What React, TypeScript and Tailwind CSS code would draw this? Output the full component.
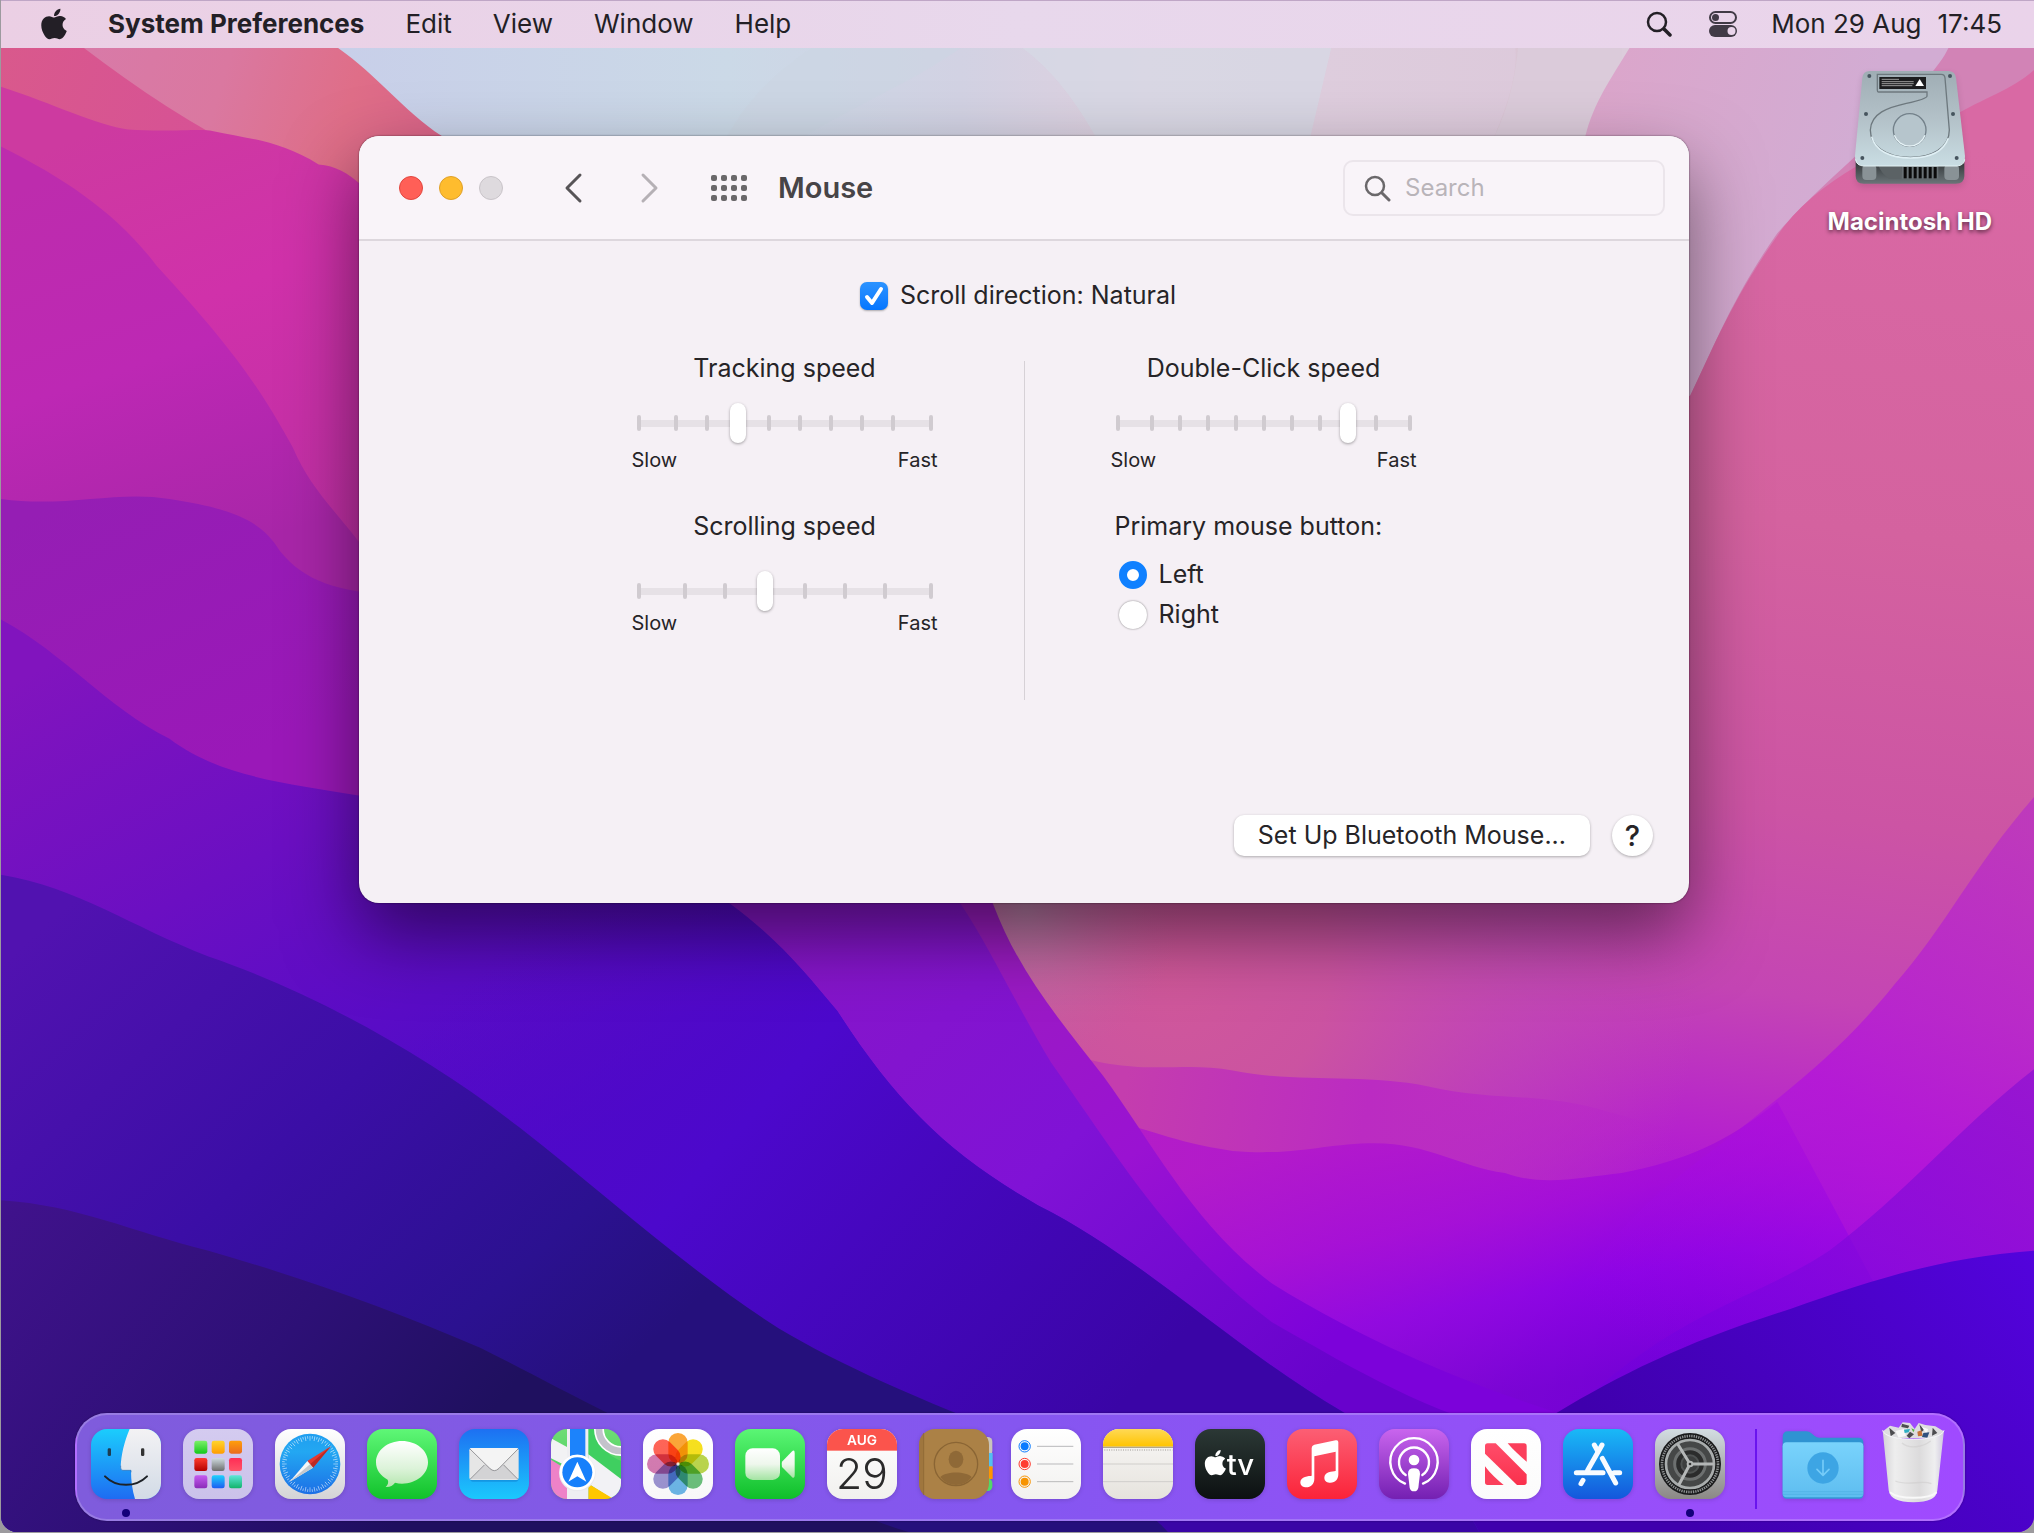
import React, { useState } from 'react';
import { FaApple } from 'react-icons/fa';

const menus = ['Edit', 'View', 'Window', 'Help'];

const Wallpaper: React.FC = () => (
  <svg
    className="absolute inset-0 h-full w-full"
    viewBox="0 0 1568 1182"
    preserveAspectRatio="none"
    aria-hidden="true"
  >
    <defs>
      <linearGradient id="sky" x1="260" y1="0" x2="1260" y2="0" gradientUnits="userSpaceOnUse">
        <stop offset="0" stopColor="#c8cfe9" />
        <stop offset="0.3" stopColor="#cbd9e7" />
        <stop offset="0.48" stopColor="#d2d2e3" />
        <stop offset="0.62" stopColor="#dfd0df" />
        <stop offset="1" stopColor="#dcc8da" />
      </linearGradient>
      <linearGradient id="mauve" x1="1220" y1="40" x2="1430" y2="110" gradientUnits="userSpaceOnUse">
        <stop offset="0" stopColor="#dca5ca" />
        <stop offset="1" stopColor="#d2acd3" />
      </linearGradient>
      <linearGradient id="pink" x1="1400" y1="100" x2="1270" y2="1100" gradientUnits="userSpaceOnUse">
        <stop offset="0" stopColor="#d969a4" />
        <stop offset="0.3" stopColor="#d4629f" />
        <stop offset="0.52" stopColor="#cc54a4" />
        <stop offset="0.66" stopColor="#c445b4" />
        <stop offset="0.78" stopColor="#b520ce" />
        <stop offset="0.9" stopColor="#9604e4" />
        <stop offset="1" stopColor="#7300dc" />
      </linearGradient>
      <radialGradient id="rose" cx="900" cy="750" r="410" gradientUnits="userSpaceOnUse">
        <stop offset="0" stopColor="#d0589a" />
        <stop offset="0.3" stopColor="#cc559f" stopOpacity=".95" />
        <stop offset="0.7" stopColor="#c350b0" stopOpacity=".5" />
        <stop offset="1" stopColor="#c44cb0" stopOpacity="0" />
      </radialGradient>
      <radialGradient id="mist" cx="790" cy="700" r="120" gradientUnits="userSpaceOnUse">
        <stop offset="0" stopColor="#b387a8" stopOpacity=".8" />
        <stop offset="1" stopColor="#c0669c" stopOpacity="0" />
      </radialGradient>
      <linearGradient id="wave1" x1="870" y1="820" x2="1330" y2="900" gradientUnits="userSpaceOnUse">
        <stop offset="0" stopColor="#c43dae" />
        <stop offset="0.4" stopColor="#bb2bc2" />
        <stop offset="1" stopColor="#b520ce" stopOpacity="0" />
      </linearGradient>
      <linearGradient id="wave2" x1="1050" y1="880" x2="1090" y2="1090" gradientUnits="userSpaceOnUse">
        <stop offset="0" stopColor="#ae12d0" />
        <stop offset="0.35" stopColor="#a008dc" />
        <stop offset="0.65" stopColor="#8600e8" />
        <stop offset="1" stopColor="#7000d4" />
      </linearGradient>
      <linearGradient id="right1" x1="1560" y1="640" x2="1260" y2="1040" gradientUnits="userSpaceOnUse">
        <stop offset="0" stopColor="#b930c4" />
        <stop offset="0.5" stopColor="#b212dc" />
        <stop offset="1" stopColor="#9404e6" stopOpacity="0" />
      </linearGradient>
      <linearGradient id="right2" x1="1560" y1="830" x2="1300" y2="1080" gradientUnits="userSpaceOnUse">
        <stop offset="0" stopColor="#8f12d2" />
        <stop offset="0.7" stopColor="#7a04de" stopOpacity=".8" />
        <stop offset="1" stopColor="#6d00df" stopOpacity=".4" />
      </linearGradient>
      <linearGradient id="right3" x1="1568" y1="960" x2="1300" y2="1182" gradientUnits="userSpaceOnUse">
        <stop offset="0" stopColor="#5303dd" />
        <stop offset="1" stopColor="#3f00ad" />
      </linearGradient>
      <linearGradient id="coral" x1="60" y1="40" x2="330" y2="120" gradientUnits="userSpaceOnUse">
        <stop offset="0" stopColor="#d87aa8" />
        <stop offset="0.4" stopColor="#da78a0" />
        <stop offset="0.75" stopColor="#df6e88" />
        <stop offset="1" stopColor="#da6488" />
      </linearGradient>
      <linearGradient id="raspberry" x1="0" y1="40" x2="200" y2="110" gradientUnits="userSpaceOnUse">
        <stop offset="0" stopColor="#d9598c" />
        <stop offset="1" stopColor="#d65097" />
      </linearGradient>
      <linearGradient id="magenta" x1="100" y1="90" x2="240" y2="440" gradientUnits="userSpaceOnUse">
        <stop offset="0" stopColor="#cd3aa0" />
        <stop offset="0.4" stopColor="#d031aa" />
        <stop offset="1" stopColor="#be2fa4" />
      </linearGradient>
      <linearGradient id="orchid" x1="60" y1="130" x2="160" y2="430" gradientUnits="userSpaceOnUse">
        <stop offset="0" stopColor="#bd2cad" />
        <stop offset="0.5" stopColor="#bd28b4" />
        <stop offset="1" stopColor="#a826a8" />
      </linearGradient>
      <linearGradient id="violet" x1="60" y1="380" x2="160" y2="600" gradientUnits="userSpaceOnUse">
        <stop offset="0" stopColor="#951eb4" />
        <stop offset="1" stopColor="#9a18b8" />
      </linearGradient>
      <linearGradient id="purple" x1="60" y1="500" x2="300" y2="960" gradientUnits="userSpaceOnUse">
        <stop offset="0" stopColor="#8114be" />
        <stop offset="0.4" stopColor="#6b0fc2" />
        <stop offset="1" stopColor="#4809ca" />
      </linearGradient>
      <linearGradient id="blue" x1="400" y1="700" x2="850" y2="1100" gradientUnits="userSpaceOnUse">
        <stop offset="0" stopColor="#5a09c2" stopOpacity="0" />
        <stop offset="0.4" stopColor="#4c08cc" />
        <stop offset="1" stopColor="#3a05a6" />
      </linearGradient>
      <linearGradient id="indigo" x1="60" y1="690" x2="430" y2="1100" gradientUnits="userSpaceOnUse">
        <stop offset="0" stopColor="#5112b0" />
        <stop offset="0.45" stopColor="#3b0ea6" />
        <stop offset="0.8" stopColor="#2b1190" />
        <stop offset="1" stopColor="#25107c" />
      </linearGradient>
      <linearGradient id="night" x1="0" y1="930" x2="300" y2="1182" gradientUnits="userSpaceOnUse">
        <stop offset="0" stopColor="#40128c" />
        <stop offset="0.6" stopColor="#2d1076" />
        <stop offset="1" stopColor="#1f105f" />
      </linearGradient>
      <linearGradient id="ridge" x1="620" y1="700" x2="1000" y2="1090" gradientUnits="userSpaceOnUse">
        <stop offset="0" stopColor="#8616c8" />
        <stop offset="0.5" stopColor="#8012d6" />
        <stop offset="1" stopColor="#6802cc" />
      </linearGradient>
      <linearGradient id="ridge2" x1="760" y1="720" x2="1000" y2="1050" gradientUnits="userSpaceOnUse">
        <stop offset="0" stopColor="#9a1cc0" />
        <stop offset="0.5" stopColor="#9a12d2" />
        <stop offset="1" stopColor="#7c02da" />
      </linearGradient>
    </defs>

    {/* sky strip */}
    <rect width="1568" height="1182" fill="url(#sky)" />
    <path d="M740 37 C700 65 670 75 620 105 H560 C580 70 600 55 625 37Z" fill="#cbd5e3" opacity=".6" />
    <path d="M788 37 C812 55 830 80 844 105 H1010 L1026 37Z" fill="#d6dae5" opacity=".7" />
    <path d="M1168 37 C1170 60 1160 85 1152 105 H1250 V37Z" fill="#dac6d5" />
    <path d="M1170 37 C1168 60 1162 85 1152 105 H1222 L1256 37Z" fill="#dbcddb" opacity=".7" />

    {/* right slope */}
    <path d="M1256 37 C1242 60 1228 80 1222 105 L1230 680 H1568 V37Z" fill="url(#mauve)" />
    <path d="M1502 37 C1495 52 1480 65 1465 85 C1440 115 1400 145 1370 180 C1335 230 1320 270 1303 305 L1100 600 L1568 500 V37Z" fill="#d283b6" />
    <path d="M1568 54 C1550 70 1530 75 1505 90 C1470 110 1410 130 1375 175 C1335 230 1320 270 1303 305 L760 650 L765 697 L840 1182 H1568Z" fill="url(#pink)" />
    <path d="M730 660 H1320 V1100 H820Z" fill="url(#rose)" />
    <path d="M730 660 H1300 V900 H820Z" fill="url(#mist)" />
    <path d="M820 812 C880 832 910 818 950 826 C1000 836 1050 828 1100 838 C1150 850 1190 842 1240 858 C1280 868 1310 880 1350 890 L1300 1182 H840Z" fill="url(#wave1)" />
    <path d="M840 860 C890 872 900 880 950 888 C1000 892 1020 882 1060 882 C1100 882 1125 900 1160 905 C1190 916 1220 908 1250 905 C1300 895 1330 882 1370 850 L1450 1000 L1300 1182 H840Z" fill="url(#wave2)" opacity=".75" />
    <path d="M1568 615 C1520 670 1500 715 1460 760 C1420 810 1380 840 1330 880 C1290 910 1250 940 1220 990 L1180 1100 L1568 1000Z" fill="url(#right1)" opacity=".75" />
    <path d="M1568 825 C1510 870 1470 920 1410 965 C1350 1005 1290 1010 1200 1100 L1568 1100Z" fill="url(#right2)" opacity=".8" />
    <path d="M1568 965 C1500 970 1450 985 1380 1010 C1300 1035 1250 1060 1200 1090 C1160 1115 1120 1150 1100 1182 H1568Z" fill="url(#right3)" />

    {/* centre ridges */}
    <path d="M700 600 L765 697 C785 750 815 785 850 830 C890 885 920 945 980 990 C1060 1040 1140 1070 1200 1090 L1100 1182 H900 L600 690Z" fill="url(#ridge2)" />
    <path d="M540 600 L740 697 C765 735 780 770 810 820 C860 890 900 960 980 1020 C1050 1060 1100 1090 1180 1110 L1080 1182 H900 L540 697Z" fill="url(#ridge)" />

    {/* left slope */}
    <path d="M0 37 H260 C290 58 310 85 340 105 L540 400 V690 H0Z" fill="url(#coral)" />
    <path d="M0 37 H64 C110 72 160 105 215 130 L120 150 L0 120Z" fill="url(#raspberry)" />
    <path d="M0 67 C40 80 75 97 98 100 C130 102 155 99 163 101 C190 107 215 108 245 127 C258 128 268 134 277 142 L540 400 V690 H0Z" fill="url(#magenta)" />
    <path d="M0 113 C50 138 90 165 120 205 C180 270 200 300 225 345 C240 380 260 395 285 430 V690 H0Z" fill="url(#orchid)" />
    <path d="M0 385 C50 392 90 378 130 385 C175 392 200 400 215 425 C235 450 260 455 300 460 V690 H0Z" fill="url(#violet)" />
    <path d="M0 478 C50 505 80 545 130 570 C170 600 220 604 277 614 C350 640 480 650 562 697 C600 725 620 750 645 780 C690 850 730 890 800 930 C880 970 950 1040 1036 1090 C1080 1115 1120 1140 1140 1182 H0Z" fill="url(#purple)" />
    <path d="M200 650 L562 697 C600 725 620 750 645 780 C690 850 730 890 800 930 C880 970 950 1040 1036 1090 C1080 1115 1120 1140 1140 1182 H500Z" fill="url(#blue)" />
    <path d="M0 675 C60 685 100 715 160 738 C240 765 330 815 400 870 C470 925 530 980 600 1025 C650 1055 720 1085 800 1115 C850 1140 880 1160 900 1182 H0Z" fill="url(#indigo)" />
    <path d="M0 926 C60 930 100 950 160 965 C230 985 300 1010 370 1040 C430 1070 480 1100 560 1130 C620 1150 660 1170 700 1182 H0Z" fill="url(#night)" />
  </svg>
);

/* Every dock tile is drawn on a 210 unit square */
const Tile: React.FC<{ id: string; label: string; from: string; to: string; children?: React.ReactNode }> = ({
  id,
  label,
  from,
  to,
  children,
}) => (
  <svg className="h-[70px] w-[70px] drop-shadow-sm" viewBox="0 0 210 210" role="img" aria-label={label}>
    <defs>
      <linearGradient id={`${id}-bg`} x1="0" y1="0" x2="0" y2="1">
        <stop offset="0" stopColor={from} />
        <stop offset="1" stopColor={to} />
      </linearGradient>
      <clipPath id={`${id}-clip`}>
        <rect width="210" height="210" rx="48" />
      </clipPath>
    </defs>
    <g clipPath={`url(#${id}-clip)`}>
      <rect width="210" height="210" fill={`url(#${id}-bg)`} />
      {children}
    </g>
  </svg>
);

const launchpadColors = [
  ['#7cf06a', '#14c91c'],
  ['#ffd52e', '#ff9d00'],
  ['#ff9f0a', '#ea6a1e'],
  ['#ff3b30', '#b40000'],
  ['#cfdbe0', '#6d6d6d'],
  ['#ff2d55', '#ff5468'],
  ['#c55bf0', '#8a2bb8'],
  ['#1fd0fc', '#1c5cf2'],
  ['#5de6d8', '#12b36a'],
];

const petals = ['#fb9a1c', '#f6dd00', '#b2d235', '#57b96a', '#5aaee6', '#8f86cc', '#cf6aa8', '#ff5040'];

const Finder = () => (
  <Tile id="finder" label="Finder" from="#1bcdfd" to="#1e6cf2">
    <defs>
      <linearGradient id="finder-face" x1="0" y1="0" x2="0" y2="1">
        <stop offset="0" stopColor="#f3f2f4" />
        <stop offset="1" stopColor="#d2dbe6" />
      </linearGradient>
    </defs>
    <path d="M116 0C100 38 90 78 89 116Q89 124 96 124H120C120 156 124 184 132 210H210V0Z" fill="url(#finder-face)" />
    <path d="M89 110Q88 124 96 124H120V130" fill="none" stroke="#2c6fb5" strokeWidth="2" />
    <rect x="50" y="58" width="10" height="23" rx="4" fill="#1d3d52" />
    <rect x="150" y="58" width="10" height="23" rx="4" fill="#333" />
    <path d="M42 142C76 176 134 176 168 142" fill="none" stroke="#1d2227" strokeWidth="6" strokeLinecap="round" />
  </Tile>
);

const Launchpad = () => (
  <Tile id="launchpad" label="Launchpad" from="#d4cbf0" to="#cbc2ea">
    {launchpadColors.map(([from, to], i) => (
      <g key={from}>
        <linearGradient id={`lp${i}`} x1="0" y1="0" x2="0" y2="1">
          <stop offset="0" stopColor={from} />
          <stop offset="1" stopColor={to} />
        </linearGradient>
        <rect x={34 + (i % 3) * 52} y={35 + Math.floor(i / 3) * 52} width="39" height="39" rx="7" fill={`url(#lp${i})`} />
      </g>
    ))}
  </Tile>
);

const Safari = () => (
  <Tile id="safari" label="Safari" from="#ffffff" to="#d4d4d6">
    <defs>
      <linearGradient id="safari-dial" x1="0" y1="0" x2="0" y2="1">
        <stop offset="0" stopColor="#1f9ef0" />
        <stop offset="0.3" stopColor="#23a7f2" />
        <stop offset="1" stopColor="#1c6fe6" />
      </linearGradient>
    </defs>
    <circle cx="105" cy="105" r="91" fill="url(#safari-dial)" />
    {Array.from({ length: 72 }, (_, i) => (
      <line
        key={i}
        x1="105"
        y1="21"
        x2="105"
        y2={i % 2 ? 29 : 35}
        stroke="#fff"
        strokeWidth="2"
        opacity=".75"
        transform={`rotate(${i * 5} 105 105)`}
      />
    ))}
    <path d="M168 52 L114 116 L97 96Z" fill="#e5392f" />
    <path d="M168 52 L114 116 L105 106Z" fill="#bb2a25" />
    <path d="M44 158 L97 96 L114 116Z" fill="#f6f6f6" />
    <path d="M44 158 L105 106 L114 116Z" fill="#c4c8cc" />
  </Tile>
);

const Messages = () => (
  <Tile id="messages" label="Messages" from="#5ff777" to="#11c22b">
    <defs>
      <linearGradient id="bubble" x1="0" y1="0" x2="0" y2="1">
        <stop offset="0" stopColor="#ffffff" />
        <stop offset="0.6" stopColor="#dcf3d9" />
        <stop offset="1" stopColor="#b4e6ae" />
      </linearGradient>
    </defs>
    <path d="M105 36C62 36 27 64 27 100C27 122 40 140 62 152C66 160 62 168 56 174C68 175 78 170 84 161C91 163 98 164 105 164C148 164 183 136 183 100C183 64 148 36 105 36Z" fill="url(#bubble)" />
  </Tile>
);

const Mail = () => (
  <Tile id="mail" label="Mail" from="#1d70f2" to="#1bc8fd">
    <rect x="34" y="62" width="144" height="96" rx="8" fill="#0e7cc9" opacity=".5" />
    <rect x="31" y="57" width="148" height="96" rx="7" fill="#e6e6e6" />
    <path d="M34 150 L78 105 L105 122 L134 105 L176 150Z" fill="#d3d3d5" />
    <path d="M33 60 L92 116Q106 132 120 116L177 60Q176 57 172 57H38Q34 57 33 60Z" fill="#f4f4f4" />
    <path d="M33 60 L92 118Q106 132 120 118L177 60M34 150L76 108M176 150L134 108" fill="none" stroke="#97979a" strokeWidth="3" />
  </Tile>
);

const Maps = () => (
  <Tile id="maps" label="Maps" from="#6fdd74" to="#37c95a">
    <path d="M0 92 L48 122 V210 H0Z" fill="#ee82c8" />
    <path d="M0 28 L48 54 V112 L0 88Z" fill="#f2f2f4" />
    <path d="M100 0 H140 C140 60 190 90 210 95 V150 L112 76Z" fill="#3fcf60" />
    <circle cx="210" cy="0" r="66" fill="none" stroke="#fff" strokeWidth="30" />
    <circle cx="210" cy="0" r="66" fill="none" stroke="#c3c3cb" strokeWidth="20" />
    <path d="M112 76 L210 150 V210 H184 L112 164Z" fill="#f2f2f5" />
    <path d="M112 164 L188 210 H112Z" fill="#ffc700" />
    <rect x="48" width="64" height="210" fill="#eeeef2" />
    <rect x="57" width="46" height="100" fill="#1c83fb" />
    <circle cx="79" cy="132" r="55" fill="#e9e9ee" />
    <circle cx="79" cy="130" r="53" fill="#fff" />
    <circle cx="79" cy="130" r="45" fill="#1680fb" />
    <path d="M79 98 L106 158 L79 142 L52 158Z" fill="#fff" />
  </Tile>
);

const Photos = () => (
  <Tile id="photos" label="Photos" from="#ffffff" to="#f8f8f8">
    {petals.map((color, i) => (
      <rect
        key={color}
        x="76"
        y="12"
        width="58"
        height="92"
        rx="29"
        fill={color}
        opacity=".88"
        className="mix-blend-multiply"
        transform={`rotate(${i * 45} 105 105)`}
      />
    ))}
    <circle cx="105" cy="105" r="5" fill="#fff" opacity=".8" />
  </Tile>
);

const FaceTime = () => (
  <Tile id="facetime" label="FaceTime" from="#5bf675" to="#0fbf2a">
    <defs>
      <linearGradient id="camera" x1="0" y1="0" x2="0" y2="1">
        <stop offset="0" stopColor="#ffffff" />
        <stop offset="0.5" stopColor="#eef7ec" />
        <stop offset="1" stopColor="#a3e4a2" />
      </linearGradient>
    </defs>
    <rect x="31" y="58" width="104" height="95" rx="22" fill="url(#camera)" />
    <path d="M141 98L170 68Q179 60 179 72V138Q179 152 170 143L141 114Q139 106 141 98Z" fill="url(#camera)" />
  </Tile>
);

const Calendar = () => (
  <Tile id="calendar" label="Calendar" from="#ffffff" to="#f1f0ee">
    <rect width="210" height="65" fill="#fb544c" />
    <text x="105" y="49" textAnchor="middle" fill="#fff" className="font-[Inter] text-[41px] font-semibold">AUG</text>
    <text x="105" y="179" textAnchor="middle" fill="#2a2a2a" className="font-[Inter] text-[128px] font-light">29</text>
  </Tile>
);

const Contacts = () => (
  <svg className="h-[70px] w-[74px] drop-shadow-sm" viewBox="0 0 222 210" role="img" aria-label="Contacts">
    <rect x="150" y="24" width="70" height="56" rx="14" fill="#c9c4bb" />
    <rect x="150" y="72" width="71" height="44" fill="#53bff0" />
    <rect x="150" y="112" width="71" height="38" fill="#ff9500" />
    <rect x="150" y="148" width="70" height="38" rx="14" fill="#52d869" />
    <rect width="210" height="210" rx="48" fill="#ab8146" />
    <path d="M14 12Q0 26 0 48V162Q0 184 14 198Z" fill="#9a723b" opacity=".7" />
    <path d="M14 12V198" stroke="#8a6432" strokeWidth="2" />
    <circle cx="111" cy="105" r="65" fill="none" stroke="#8a6534" strokeWidth="4" />
    <ellipse cx="111" cy="91" rx="22" ry="26" fill="#8f6937" />
    <path d="M64 144C80 126 142 126 158 144C136 176 86 176 64 144Z" fill="#8f6937" />
  </svg>
);

const Reminders = () => (
  <Tile id="reminders" label="Reminders" from="#ffffff" to="#f2f1ef">
    {['#0a7bff', '#ff3b30', '#f79300'].map((color, i) => (
      <g key={color}>
        <circle cx="41" cy={52 + i * 53} r="17" fill="none" stroke={color} strokeWidth="3" />
        <circle cx="41" cy={52 + i * 53} r="12" fill={color} />
        <path d={`M78 ${52 + i * 53}H187`} stroke="#b9b9bb" strokeWidth="3" />
      </g>
    ))}
  </Tile>
);

const Notes = () => (
  <Tile id="notes" label="Notes" from="#f9f8f7" to="#e6e3dd">
    <defs>
      <linearGradient id="notes-top" x1="0" y1="0" x2="0" y2="1">
        <stop offset="0" stopColor="#ffd955" />
        <stop offset="1" stopColor="#ffc400" />
      </linearGradient>
    </defs>
    <rect width="210" height="53" fill="url(#notes-top)" />
    <rect y="53" width="210" height="4" fill="#b3a88a" />
    <path d="M4 63H208" stroke="#b9b7b3" strokeWidth="4" strokeDasharray="3 4" />
    <path d="M0 105H210M0 158H210" stroke="#d0cecb" strokeWidth="3" />
  </Tile>
);

const Tv = () => (
  <Tile id="tv" label="TV" from="#2b3835" to="#0c1011">
    <FaApple x="18" y="58" size="86" color="#fff" />
    <text x="95" y="138" fill="#fff" className="font-[Inter] text-[88px] font-medium">tv</text>
  </Tile>
);

const Music = () => (
  <Tile id="music" label="Music" from="#fc5f74" to="#fb2339">
    <path d="M146 34 L82 47Q74 49 74 57V140C66 141 40 142 40 160C40 172 50 175 57 175C72 175 82 165 82 149V82L146 68V126C136 128 112 128 112 146C112 158 122 161 130 161C146 161 154 150 154 136V40Q154 32 146 34Z" fill="#fff" />
  </Tile>
);

const Podcasts = () => (
  <Tile id="podcasts" label="Podcasts" from="#c965ee" to="#7420b2">
    <path d="M78 164A71 71 0 1 1 132 164" fill="none" stroke="#fff" strokeWidth="7" strokeLinecap="round" />
    <path d="M80 138A45 45 0 1 1 130 138" fill="none" stroke="#fff" strokeWidth="7" strokeLinecap="round" />
    <circle cx="105" cy="93" r="16" fill="#fff" />
    <path d="M87 134Q87 118 105 118T123 134L118 176Q116 187 105 187T92 176Z" fill="#fff" />
  </Tile>
);

const News = () => (
  <Tile id="news" label="News" from="#ffffff" to="#fbfbfb">
    <defs>
      <linearGradient id="news-red" x1="0" y1="0" x2="0" y2="1">
        <stop offset="0" stopColor="#ff4d6a" />
        <stop offset="1" stopColor="#fa304c" />
      </linearGradient>
    </defs>
    <path d="M50 43H74L167 136V160Q167 168 159 168H138L42 74V51Q42 43 50 43Z" fill="url(#news-red)" />
    <path d="M110 43H159Q167 43 167 51V98C150 84 128 64 110 43Z" fill="#fb3f5b" />
    <path d="M42 112C58 134 78 152 98 168H50Q42 168 42 160Z" fill="#fb3f5b" />
  </Tile>
);

const AppStore = () => (
  <Tile id="appstore" label="App Store" from="#19b9f7" to="#1457dc">
    <g stroke="#f7fbff" strokeWidth="15" strokeLinecap="round" fill="none">
      <path d="M40 131H120" />
      <path d="M153 131H170" />
      <path d="M117 48L74 124" />
      <path d="M60 154L54 164" />
      <path d="M94 48L104 66" />
      <path d="M118 88L158 162" />
    </g>
  </Tile>
);

const Preferences = () => (
  <Tile id="prefs" label="System Preferences" from="#d3dde2" to="#8b8885">
    <circle cx="105" cy="105" r="93" fill="#191a1b" />
    <circle cx="105" cy="105" r="84" fill="none" stroke="#8d9091" strokeWidth="8" strokeDasharray="4 3" />
    <circle cx="105" cy="105" r="75" fill="#454747" />
    <circle cx="105" cy="105" r="72" fill="none" stroke="#a9adad" strokeWidth="8" />
    <circle cx="105" cy="105" r="46" fill="#2b2c2c" stroke="#6d7070" strokeWidth="9" />
    <circle cx="105" cy="105" r="26" fill="#3c3e3e" stroke="#4f5252" strokeWidth="6" />
    <path d="M105 105L173 105M105 105L70 48M105 105L73 165" stroke="#b4b7b7" strokeWidth="9" strokeLinecap="round" />
    <circle cx="105" cy="105" r="10" fill="#b4b7b7" />
    <circle cx="105" cy="105" r="4" fill="#333" />
  </Tile>
);

const Downloads = () => (
  <svg className="h-[70px] w-[82px] drop-shadow-sm" viewBox="0 0 246 210" role="img" aria-label="Downloads">
    <defs>
      <linearGradient id="folder" x1="0" y1="0" x2="0" y2="1">
        <stop offset="0" stopColor="#79d3fc" />
        <stop offset="1" stopColor="#5ebdf0" />
      </linearGradient>
    </defs>
    <path d="M2 24Q2 7 18 7H74Q82 7 88 13L98 21Q104 26 112 26H230Q244 26 244 40V70H2Z" fill="#2f93d2" />
    <rect x="2" y="40" width="242" height="169" rx="12" fill="#3298d4" />
    <rect x="2" y="40" width="242" height="165" rx="12" fill="url(#folder)" />
    <path d="M2 188H244M2 196H244" stroke="#4caee3" strokeWidth="2" />
    <circle cx="123" cy="117" r="47" fill="#3da5e4" />
    <path d="M123 94V138M105 121L123 139L141 121" fill="none" stroke="#74cbf8" strokeWidth="5" strokeLinecap="round" strokeLinejoin="round" />
  </svg>
);

const Trash = () => (
  <svg className="h-[82px] w-[63px]" viewBox="0 0 189 246" role="img" aria-label="Bin">
    <defs>
      <linearGradient id="bin" x1="0" y1="0" x2="1" y2="0">
        <stop offset="0" stopColor="#d4d3d6" />
        <stop offset="0.2" stopColor="#eeeeee" />
        <stop offset="0.6" stopColor="#dcdbdc" />
        <stop offset="0.85" stopColor="#efeff0" />
        <stop offset="1" stopColor="#cfc8de" />
      </linearGradient>
    </defs>
    <path d="M4 30L24 14L50 20L62 4L84 6L98 24L110 6L130 12L160 16L184 30L176 52H12Z" fill="#dedde0" />
    <path d="M22 20L40 36L26 46ZM60 8L82 14L78 22L58 18ZM112 10L126 26L118 34ZM84 32L96 40L82 52L74 44ZM152 20L166 36L150 44Z" fill="#4d4d50" />
    <path d="M40 30L66 24L72 44L50 50ZM120 18L138 24L134 40Z" fill="#f8f8f8" />
    <path d="M66 26L84 24L80 34L68 36Z" fill="#2fb0c4" />
    <path d="M106 32L118 28L122 44L108 46Z" fill="#c7733a" />
    <path d="M124 36L142 34L136 50L120 48Z" fill="#31507e" />
    <path d="M88 22L98 26L94 34Z" fill="#5cb346" />
    <path d="M2 28L20 208Q25 244 94 244T166 208L186 28C180 64 8 64 2 28Z" fill="url(#bin)" />
    <path d="M2 28C8 64 180 64 186 28" fill="none" stroke="#f6f6f8" strokeWidth="3" />
    <path d="M60 66C80 84 120 80 146 60M40 180C80 196 120 176 148 188" fill="none" stroke="#cbc9ca" strokeWidth="4" opacity=".5" />
    <path d="M24 214C50 236 140 236 164 214" fill="none" stroke="#f9f9f9" strokeWidth="6" />
  </svg>
);

const HardDrive = () => (
  <svg className="h-[114px] w-[114px] drop-shadow-md" viewBox="0 0 342 342" aria-hidden="true">
    <defs>
      <linearGradient id="hd-top" x1="0" y1="0" x2="0" y2="1">
        <stop offset="0" stopColor="#9fadb4" />
        <stop offset="0.5" stopColor="#b3c1c8" />
        <stop offset="1" stopColor="#c9dde3" />
      </linearGradient>
      <linearGradient id="hd-base" x1="0" y1="0" x2="0" y2="1">
        <stop offset="0" stopColor="#2d3133" />
        <stop offset="1" stopColor="#6b7478" />
      </linearGradient>
    </defs>
    <path d="M8 270V318Q8 341 32 341H308Q334 341 334 318V270Z" fill="url(#hd-base)" />
    <rect x="28" y="284" width="42" height="46" rx="12" fill="#899296" />
    <rect x="274" y="284" width="44" height="46" rx="12" fill="#899296" />
    <path d="M76 286H146V326H108Q84 310 76 286Z" fill="#5b6265" />
    <rect x="146" y="288" width="110" height="38" fill="#697175" />
    {[0, 1, 2, 3, 4, 5, 6].map((i) => (
      <rect key={i} x={152 + i * 15} y="291" width="9" height="34" fill="#0a0a0a" />
    ))}
    <path d="M50 3H286Q306 3 309 24L336 258Q338 286 312 288H30Q4 286 6 258L28 24Q30 3 50 3Z" fill="url(#hd-top)" />
    <path d="M8 268Q10 287 32 288H312Q334 286 335 268" fill="none" stroke="#e3f1f4" strokeWidth="3" />
    <path d="M73 13H265Q275 13 276 24L289 180C289 235 235 262 172 262C95 262 52 225 52 180C54 130 105 112 160 100Q222 87 222 78V66H76Q73 66 73 60Z" fill="none" stroke="#6d787e" strokeWidth="4" />
    <path d="M56 200C66 242 112 264 172 264C228 264 270 248 286 205" fill="none" stroke="#e0f0f5" strokeWidth="5" />
    <circle cx="170" cy="180" r="49" fill="#b6c5cc" stroke="#73818a" strokeWidth="4" />
    <path d="M124 196A49 49 0 0 0 216 196" fill="none" stroke="#e6f3f7" strokeWidth="4" />
    <rect x="79" y="21" width="140" height="36" fill="#1c1d1f" />
    <path d="M86 28H138M86 35H182M86 41H182M86 47H178" stroke="#9a9a9a" strokeWidth="3" />
    <path d="M200 27L213 48H187Z" fill="#fff" />
    {[[49, 18], [291, 18], [39, 132], [300, 132], [28, 264], [311, 264]].map(([cx, cy]) => (
      <circle key={`${cx}-${cy}`} cx={cx} cy={cy} r="6" fill="#46545e" />
    ))}
  </svg>
);

const dockApps: { name: string; Icon: React.FC; running?: boolean }[] = [
  { name: 'Finder', Icon: Finder, running: true },
  { name: 'Launchpad', Icon: Launchpad },
  { name: 'Safari', Icon: Safari },
  { name: 'Messages', Icon: Messages },
  { name: 'Mail', Icon: Mail },
  { name: 'Maps', Icon: Maps },
  { name: 'Photos', Icon: Photos },
  { name: 'FaceTime', Icon: FaceTime },
  { name: 'Calendar', Icon: Calendar },
  { name: 'Contacts', Icon: Contacts },
  { name: 'Reminders', Icon: Reminders },
  { name: 'Notes', Icon: Notes },
  { name: 'TV', Icon: Tv },
  { name: 'Music', Icon: Music },
  { name: 'Podcasts', Icon: Podcasts },
  { name: 'News', Icon: News },
  { name: 'App Store', Icon: AppStore },
  { name: 'System Preferences', Icon: Preferences, running: true },
];

const MenuBar: React.FC = () => (
  <header className="relative flex h-12 items-center justify-between border-t border-[#bfa6c6] bg-gradient-to-r from-[#ebcfe4] via-[#e8d8ec] to-[#ead3ea] pb-0.5 pl-10 pr-8 text-[26px] text-[#231f26]">
    <nav className="flex items-center gap-[41px]">
      <button aria-label="Apple menu">
        <FaApple className="h-9 w-[26px]" />
      </button>
      <button className="font-bold">System Preferences</button>
      {menus.map((menu) => (
        <button key={menu}>{menu}</button>
      ))}
    </nav>
    <div className="flex items-center">
      <button aria-label="Spotlight" className="mr-[37px]">
        <svg className="h-[26px] w-[26px]" viewBox="0 0 26 26" fill="none" stroke="currentColor">
          <circle cx="11" cy="11" r="9" strokeWidth="2.500" />
          <path d="M18 18L24 24" strokeWidth="3.500" strokeLinecap="round" />
        </svg>
      </button>
      <button aria-label="Control Centre" className="mr-[34px] text-[#413a46]">
        <svg className="h-[26px] w-7" viewBox="0 0 28 26">
          <rect x="1" y="1" width="26" height="11" rx="5.500" fill="none" stroke="currentColor" strokeWidth="2" />
          <circle cx="6.500" cy="6.500" r="3.500" fill="currentColor" />
          <rect y="14" width="28" height="12" rx="6" fill="currentColor" />
          <circle cx="22.500" cy="20" r="4" fill="#ead5eb" />
        </svg>
      </button>
      <time className="flex gap-4">
        <span>Mon 29 Aug</span>
        <span>17:45</span>
      </time>
    </div>
  </header>
);

interface SpeedSliderProps {
  label: string;
  steps: number;
  initial: number;
  className: string;
}

const SpeedSlider: React.FC<SpeedSliderProps> = ({ label, steps, initial, className }) => {
  const [value, setValue] = useState(initial);
  const id = label.toLowerCase().replace(/\s/g, '-');
  // the thumb travels 280px, inner ticks sit where it stops
  const inset = 280 / steps + 2;

  return (
    <div className="flex flex-col">
      <label htmlFor={id} className="text-center leading-9">{label}</label>
      <div className={`relative mx-auto flex h-10 w-[296px] items-center ${className}`}>
        <div className="h-[7px] w-full bg-[#e6e1e6]"></div>
        <div className="absolute inset-0 flex items-center">
          <span className="h-4 w-1 rounded-sm bg-[#d0cbd0]"></span>
          <div className="flex flex-1 justify-between" style={{ paddingLeft: inset, paddingRight: inset }}>
            {Array.from({ length: steps - 1 }, (_, i) => (
              <span key={i} className="h-4 w-1 rounded-sm bg-[#d0cbd0]"></span>
            ))}
          </div>
          <span className="h-4 w-1 rounded-sm bg-[#d0cbd0]"></span>
        </div>
        <input
          id={id}
          type="range"
          min={0}
          max={steps}
          value={value}
          onChange={(e) => setValue(Number(e.target.value))}
          className="absolute inset-0 h-10 w-full appearance-none bg-transparent [&::-webkit-slider-thumb]:h-10 [&::-webkit-slider-thumb]:w-4 [&::-webkit-slider-thumb]:appearance-none [&::-webkit-slider-thumb]:rounded-full [&::-webkit-slider-thumb]:bg-white [&::-webkit-slider-thumb]:shadow-[0_1px_3px_rgba(0,0,0,0.35)]"
        />
      </div>
    </div>
  );
};

const Range = ({ className = '' }: { className?: string }) => (
  <div className={`flex justify-between text-[20px] leading-6 ${className}`}>
    <span>Slow</span>
    <span>Fast</span>
  </div>
);

const MouseWindow: React.FC = () => {
  const [natural, setNatural] = useState(true);
  const [primary, setPrimary] = useState('Left');

  return (
    <section className="absolute left-[358px] top-[88px] w-[1330px] overflow-hidden rounded-[20px] bg-[#f5f0f5] text-[25px] text-[#262427] shadow-[0_0_2px_rgba(0,0,0,0.6),0_32px_72px_rgba(0,0,0,0.5)]">
      <header className="flex h-[105px] items-center border-b-2 border-[#ddd7dd] bg-[#f9f4f9] pl-10 pr-6">
        <div className="flex gap-4">
          <button aria-label="Close" className="h-6 w-6 rounded-full border border-[#e2463f] bg-[#ff5f57]"></button>
          <button aria-label="Minimise" className="h-6 w-6 rounded-full border border-[#e0a028] bg-[#febc2e]"></button>
          <button aria-label="Zoom" className="h-6 w-6 rounded-full border border-[#c9c4c9] bg-[#dedade]"></button>
        </div>
        <button aria-label="Back" className="ml-[53px] text-[#575457]">
          <svg className="h-9 w-9" viewBox="0 0 36 36" fill="none" stroke="currentColor" strokeWidth="3" strokeLinecap="round" strokeLinejoin="round">
            <path d="M24 5L11 18L24 31" />
          </svg>
        </button>
        <button aria-label="Forward" className="ml-[39px] text-[#b5b0b5]">
          <svg className="h-9 w-9" viewBox="0 0 36 36" fill="none" stroke="currentColor" strokeWidth="3" strokeLinecap="round" strokeLinejoin="round">
            <path d="M12 5L25 18L12 31" />
          </svg>
        </button>
        <button aria-label="Show all" className="ml-11 grid grid-cols-4 gap-1">
          {Array.from({ length: 12 }, (_, i) => (
            <span key={i} className="h-1.5 w-1.5 rounded-[2px] bg-[#6a676a]"></span>
          ))}
        </button>
        <h1 className="ml-[31px] text-[29px] font-semibold text-[#474447]">Mouse</h1>
        <label className="ml-auto flex h-14 w-[322px] items-center gap-3.5 rounded-[10px] border-2 border-[#ebe5eb] px-[18px] text-[24px]">
          <svg className="h-7 w-7 shrink-0 text-[#6b686b]" viewBox="0 0 28 28" fill="none" stroke="currentColor" strokeLinecap="round">
            <circle cx="12" cy="12" r="9" strokeWidth="2.500" />
            <path d="M19 19L26 26" strokeWidth="3" />
          </svg>
          <input type="search" aria-label="Search" placeholder="Search" className="min-w-0 flex-1 bg-transparent outline-none placeholder:text-[#b9b4b9]" />
        </label>
      </header>

      <div className="flex flex-col pb-[47px] pt-[37px]">
        <label className="flex h-9 items-center justify-center gap-3 pr-3">
          <span className="relative flex">
            <input
              type="checkbox"
              checked={natural}
              onChange={() => setNatural(!natural)}
              className="peer h-7 w-7 appearance-none rounded-[7px] bg-white shadow-[0_1px_2px_rgba(0,0,0,0.3)] checked:bg-gradient-to-b checked:from-[#2b93ff] checked:to-[#0476ff]"
            />
            <svg className="pointer-events-none absolute inset-0 hidden h-7 w-7 peer-checked:block" viewBox="0 0 28 28" fill="none" stroke="#fff" strokeWidth="4" strokeLinecap="round" strokeLinejoin="round">
              <path d="M7 15L12 21L21 7" />
            </svg>
          </span>
          Scroll direction: Natural
        </label>

        <div className="mt-9 flex justify-center gap-[86px]">
          <div className="w-[306px]">
            <SpeedSlider label="Tracking speed" steps={9} initial={3} className="mt-[17px]" />
            <Range className="mt-[5px]" />
            <div className="mt-9">
              <SpeedSlider label="Scrolling speed" steps={7} initial={3} className="mt-[27px]" />
              <Range />
            </div>
          </div>
          <div className="mt-[11px] h-[339px] w-px bg-[#d6d1d6]"></div>
          <div className="w-[306px]">
            <SpeedSlider label="Double-Click speed" steps={10} initial={8} className="mt-[17px]" />
            <Range className="mt-[5px]" />
            <fieldset className="mt-9">
              <legend className="whitespace-nowrap pl-1 leading-9">Primary mouse button:</legend>
              <div className="mt-4 flex flex-col gap-2.5 pl-2">
                {['Left', 'Right'].map((side) => (
                  <label key={side} className="flex h-[30px] items-center gap-3">
                    <input
                      type="radio"
                      name="primary"
                      checked={primary === side}
                      onChange={() => setPrimary(side)}
                      className="h-7 w-7 appearance-none rounded-full bg-white shadow-[0_0_2px_rgba(0,0,0,0.5)] checked:border-8 checked:border-[#0f80ff] checked:shadow-none"
                    />
                    {side}
                  </label>
                ))}
              </div>
            </fieldset>
          </div>
        </div>

        <div className="mt-[115px] flex items-center justify-end gap-[22px] pr-9">
          <button className="h-[41px] rounded-[10px] bg-white px-6 shadow-[0_1px_3px_rgba(0,0,0,0.3)]">
            Set Up Bluetooth Mouse...
          </button>
          <button aria-label="Help" className="h-[41px] w-[41px] rounded-full bg-white text-[29px] font-medium leading-none shadow-[0_1px_3px_rgba(0,0,0,0.3)]">
            ?
          </button>
        </div>
      </div>
    </section>
  );
};

const Dock: React.FC = () => (
  <footer className="relative flex justify-center pb-[11px] pl-1">
    <div className="flex h-[108px] items-start rounded-[32px] border-2 border-white/20 bg-gradient-to-r from-[#7f5cdc] via-[#8556f0] to-[#a04aff] px-3.5 pr-[18px] pt-3.5 shadow-[0_0_2px_rgba(0,0,0,0.4)]">
      <div className="flex gap-[22px]">
        {dockApps.map(({ name, Icon, running }) => (
          <button key={name} aria-label={name} className="flex w-[70px] flex-col items-start">
            <Icon />
            {running && <span className="mt-2.5 h-2 w-2 self-center rounded-full bg-[#14007a]"></span>}
          </button>
        ))}
      </div>
      <div className="ml-[30px] h-20 w-0.5 bg-[#6a14ee]"></div>
      <button aria-label="Downloads" className="ml-[25px]">
        <Downloads />
      </button>
      <button aria-label="Bin" className="-mt-2 ml-[18px]">
        <Trash />
      </button>
    </div>
  </footer>
);

const App: React.FC = () => (
  <div className="min-h-screen bg-[#9c9a9e] pb-px pl-px font-[Inter,'Liberation_Sans',sans-serif]">
    <div className="relative flex min-h-[calc(100vh-1px)] flex-col overflow-hidden rounded-b-[16px]">
      <Wallpaper />
      <MenuBar />
      <main className="flex-1">
        <div className="relative">
          <MouseWindow />
          <figure className="absolute right-[42px] top-[22px] flex flex-col items-center gap-5">
            <HardDrive />
            <figcaption className="text-[24px] font-bold leading-9 text-white [text-shadow:0_2px_4px_rgba(0,0,0,0.6)]">
              Macintosh HD
            </figcaption>
          </figure>
        </div>
      </main>
      <Dock />
    </div>
  </div>
);

export default App;
